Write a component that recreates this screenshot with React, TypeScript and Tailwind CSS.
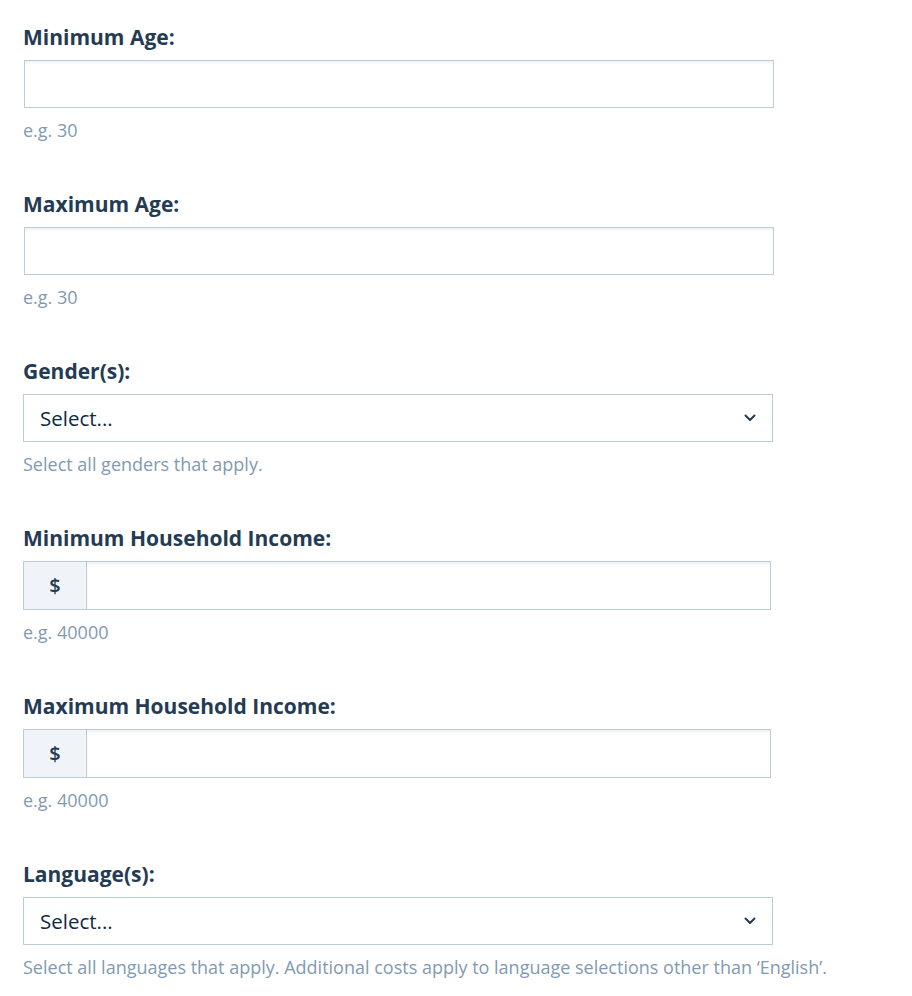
import React from 'react';

const Label: React.FC<{ children: React.ReactNode }> = ({ children }) => (
  <label className="block text-[21px] leading-[27px] font-bold text-[#243b53] mb-[9px]">{children}</label>
);

const Help: React.FC<{ children: React.ReactNode }> = ({ children }) => (
  <p className="mt-[10px] text-[18px] leading-[24px] text-[#829ab1]">{children}</p>
);

const TextInput = () => (
  <input
    type="text"
    className="block w-full h-[48px] border border-[#bcccdc] bg-white shadow-[inset_0_2px_2px_rgba(16,42,67,0.06)] px-4 outline-none"
  />
);

const SelectBox = () => (
  <div className="flex items-center justify-between w-full h-[48px] border border-[#bcccdc] bg-white pl-4 pr-4">
    <span className="text-[20.5px] text-[#102a43]">Select...</span>
    <svg width="12" height="8" viewBox="0 0 12 8" fill="none">
      <path d="M1.5 1.5L6 6L10.5 1.5" stroke="#243b53" strokeWidth="2" strokeLinecap="round" strokeLinejoin="round" />
    </svg>
  </div>
);

const MoneyInput = () => (
  <div className="flex w-[748px] h-[49px] border border-[#bcccdc] bg-white">
    <div className="w-[63px] flex items-center justify-center bg-[#f0f4f8] border-r border-[#bcccdc] text-[20px] font-semibold text-[#243b53]">
      $
    </div>
    <input type="text" className="flex-1 shadow-[inset_0_2px_2px_rgba(16,42,67,0.06)] px-4 outline-none" />
  </div>
);

export default function App() {
  return (
    <div className="min-h-screen bg-white" style={{ fontFamily: '"Open Sans", "Noto Sans", sans-serif' }}>
      <div className="pl-[23px] pt-[24px] w-[900px] flex flex-col gap-[49px]">
        {/* Minimum Age */}
        <div>
          <Label>Minimum Age:</Label>
          <div className="pl-px w-[751px]">
            <TextInput />
          </div>
          <Help>e.g. 30</Help>
        </div>

        {/* Maximum Age */}
        <div>
          <Label>Maximum Age:</Label>
          <div className="pl-px w-[751px]">
            <TextInput />
          </div>
          <Help>e.g. 30</Help>
        </div>

        {/* Gender */}
        <div>
          <Label>Gender(s):</Label>
          <div className="w-[750px]">
            <SelectBox />
          </div>
          <Help>Select all genders that apply.</Help>
        </div>

        {/* Min income */}
        <div>
          <Label>Minimum Household Income:</Label>
          <MoneyInput />
          <Help>e.g. 40000</Help>
        </div>

        {/* Max income */}
        <div>
          <Label>Maximum Household Income:</Label>
          <MoneyInput />
          <Help>e.g. 40000</Help>
        </div>

        {/* Language */}
        <div>
          <Label>Language(s):</Label>
          <div className="w-[750px]">
            <SelectBox />
          </div>
          <Help>Select all languages that apply. Additional costs apply to language selections other than ‘English’.</Help>
        </div>
      </div>
    </div>
  );
}
